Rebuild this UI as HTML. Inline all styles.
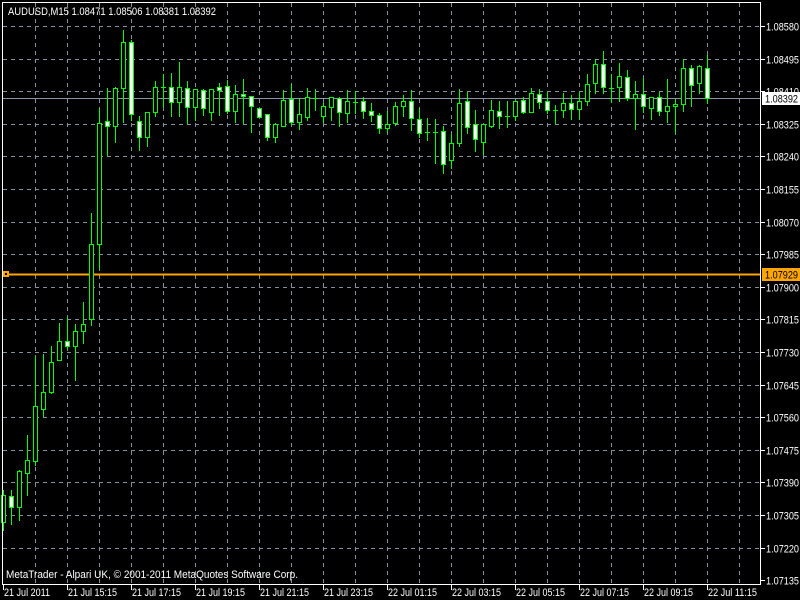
<!DOCTYPE html>
<html><head><meta charset="utf-8"><style>
html,body{margin:0;padding:0;background:#000;width:800px;height:600px;overflow:hidden}
svg{display:block}
text{font-family:"Liberation Sans",sans-serif;font-size:11px;fill:#fff}
</style></head><body>
<svg id="s" width="800" height="600" xmlns="http://www.w3.org/2000/svg" shape-rendering="crispEdges">
<rect width="800" height="600" fill="#000"/>
<g id="grid" stroke="#8090a0" stroke-dasharray="4,4" stroke-width="1"></g>
<line x1="3" y1="98.5" x2="760" y2="98.5" stroke="#8a96a6"/>
<line x1="3" y1="274.5" x2="760" y2="274.5" stroke="#ffa500" stroke-width="2"/>
<rect x="3" y="271" width="6" height="6" fill="#ffa500"/><rect x="5" y="273" width="2" height="2" fill="#000"/>
<g id="candles"></g>
<rect x="2.5" y="2.5" width="758" height="582" fill="none" stroke="#fff"/>
<g id="axis"></g>
<rect x="762" y="92" width="38" height="13" fill="#fff"/>
<text x="765" y="102.5" textLength="33" lengthAdjust="spacingAndGlyphs" style="fill:#000">1.08392</text>
<rect x="762" y="268" width="38" height="13" fill="#ffa500"/>
<text x="765" y="278.5" textLength="33" lengthAdjust="spacingAndGlyphs" style="fill:#000">1.07929</text>
<text x="8" y="15" textLength="208" lengthAdjust="spacingAndGlyphs">AUDUSD,M15  1.08471 1.08506 1.08381 1.08392</text>
<text x="6" y="578" textLength="292" lengthAdjust="spacingAndGlyphs">MetaTrader - Alpari UK, © 2001-2011 MetaQuotes Software Corp.</text>
</svg>
<script>
var NS="http://www.w3.org/2000/svg";
function el(p,t,a){var e=document.createElementNS(NS,t);for(var k in a)e.setAttribute(k,a[k]);p.appendChild(e);return e;}
var g=document.getElementById('grid'),ax=document.getElementById('axis'),cg=document.getElementById('candles');
var labels=["1.08580","1.08495","1.08410","1.08325","1.08240","1.08155","1.08070","1.07985","1.07900","1.07815","1.07730","1.07645","1.07560","1.07475","1.07390","1.07305","1.07220","1.07135"];
for(var i=0;i<18;i++){var y=Math.round(26+32.6*i)+0.5;
 if(i<17) el(g,'line',{x1:3,y1:y,x2:760,y2:y});
 el(ax,'line',{x1:761,y1:y,x2:765,y2:y,stroke:'#fff'});
 var t=el(ax,'text',{x:766,y:y+4,textLength:33,lengthAdjust:'spacingAndGlyphs'});t.textContent=labels[i];}
for(var x=35;x<760;x+=32){el(g,'line',{x1:x+0.5,y1:3,x2:x+0.5,y2:584});}
var tl=["21 Jul 2011","21 Jul 15:15","21 Jul 17:15","21 Jul 19:15","21 Jul 21:15","21 Jul 23:15","22 Jul 01:15","22 Jul 03:15","22 Jul 05:15","22 Jul 07:15","22 Jul 09:15","22 Jul 11:15"];
for(var i=0;i<12;i++){var x=3+64*i;el(ax,'line',{x1:x+0.5,y1:585,x2:x+0.5,y2:590,stroke:'#fff'});var t=el(ax,'text',{x:x+1,y:596,textLength:i==0?46:49,lengthAdjust:'spacingAndGlyphs'});t.textContent=tl[i];}
var C=[
['u',495,522,490,530],['d',496,507,490,524],['u',471,507,470,520],['u',460,473,435,495],['u',406,461,356,465],
['u',392,409,354,416],['u',362,392,346,393],['u',341,360,323,360],['d',341,346,317,348],['u',331,346,324,380],
['u',324,331,302,343],['u',244,319,213,325],['u',123,244,108,268],['d',121,126,88,155],['u',88,126,87,142],
['u',42,88,30,122],['d',42,114,40,120],['d',121,137,116,150],['u',112,137,112,146],['u',87,112,81,116],
['j',87,87,74,107],['d',87,102,73,116],['u',87,102,62,116],['d',88,107,81,123],['u',89,107,89,120],
['d',90,108,89,115],['u',89,112,89,120],['d',87,90,83,115],['d',86,111,80,113],['u',94,111,85,122],
['d',94,96,79,123],['d',96,106,96,132],['d',108,117,108,117],['d',114,137,114,140],['u',124,137,123,142],
['u',100,126,90,126],['d',99,122,84,124],['u',114,122,98,129],['u',97,117,88,120],['j',98,98,89,110],
['u',106,116,103,122],['u',97,107,97,120],['d',98,112,97,126],['u',101,113,90,122],['j',102,102,91,113],
['d',101,111,97,118],['d',111,115,103,121],['d',115,128,113,133],['u',124,128,111,132],['u',106,123,102,125],
['u',101,106,95,116],['d',101,118,90,130],['d',119,133,108,137],['j',132,132,118,140],['j',132,132,119,163],
['d',131,164,126,173],['u',143,160,134,168],['u',103,143,89,146],['d',101,127,92,133],['d',124,139,110,151],
['u',124,142,124,154],['u',110,126,100,127],['d',111,116,101,128],['j',116,116,101,127],['u',101,116,101,120],
['d',100,112,97,113],['u',93,112,88,112],['d',94,102,89,108],['d',101,110,92,113],['j',110,110,105,123],
['u',103,110,93,117],['d',103,109,95,119],['u',101,109,92,119],['u',84,101,74,105],['u',64,83,59,93],
['d',64,87,51,93],['j',88,88,74,102],['u',76,87,63,101],['d',77,98,70,100],['u',94,98,81,129],
['d',94,106,78,112],['u',97,108,97,119],['d',97,111,92,115],['u',106,111,79,122],['u',104,106,99,132],
['u',68,104,59,111],['d',68,85,65,106],['u',66,83,65,93],['d',68,98,55,103]
];
for(var k=0;k<C.length;k++){var c=C[k],x=3+8*k;
 el(cg,'line',{x1:x+0.5,y1:c[3],x2:x+0.5,y2:c[4]+1,stroke:'#00ff00'});
 if(c[0]=='j'){el(cg,'line',{x1:x-2,y1:c[1]+0.5,x2:x+3,y2:c[1]+0.5,stroke:'#00ff00'});}
 else{var h=Math.max(c[2]-c[1],1);el(cg,'rect',{x:x-1.5,y:c[1]+0.5,width:4,height:h,fill:c[0]=='d'?'#fff':'#000',stroke:'#00ff00'});}
}
</script>
</body></html>
